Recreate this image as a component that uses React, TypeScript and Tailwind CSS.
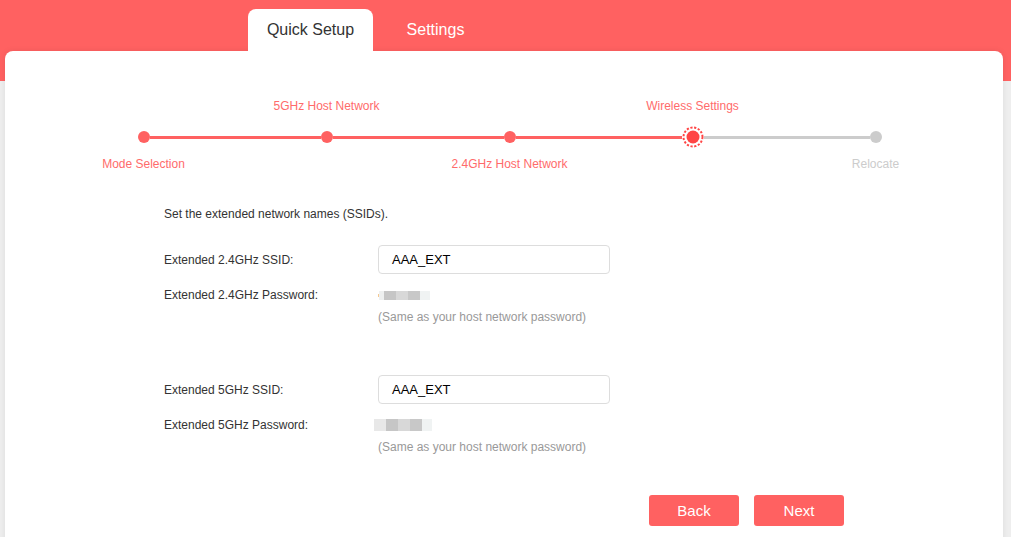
import React from "react";

type Step = { label: string; pos: "top" | "bottom"; state: "done" | "current" | "todo" };

const steps: Step[] = [
  { label: "Mode Selection", pos: "bottom", state: "done" },
  { label: "5GHz Host Network", pos: "top", state: "done" },
  { label: "2.4GHz Host Network", pos: "bottom", state: "done" },
  { label: "Wireless Settings", pos: "top", state: "current" },
  { label: "Relocate", pos: "bottom", state: "todo" },
];

function Dot({ state }: { state: Step["state"] }) {
  if (state === "current") {
    return (
      <svg width="22" height="22" viewBox="0 0 22 22" className="shrink-0">
        <circle cx="11" cy="11" r="9.5" fill="white" stroke="#ff4545" strokeWidth="2" strokeDasharray="2.2 1.6" />
        <circle cx="11" cy="11" r="6.5" fill="#ff4545" />
      </svg>
    );
  }
  return (
    <div
      className={
        "w-[12px] h-[12px] rounded-full shrink-0 " +
        (state === "done" ? "bg-[#ff6161]" : "bg-[#cccccc]")
      }
    />
  );
}

function Stepper() {
  return (
    <div className="flex ml-[47px] w-[915px]">
      {steps.map((s, i) => {
        const leftColor =
          i === 0 ? "bg-transparent" : s.state === "todo" ? "bg-[#cccccc]" : "bg-[#ff6161]";
        const rightColor =
          i === steps.length - 1
            ? "bg-transparent"
            : steps[i + 1].state === "todo"
            ? "bg-[#cccccc]"
            : "bg-[#ff6161]";
        const labelColor = s.state === "todo" ? "text-[#cccccc]" : "text-[#ff6b6b]";
        return (
          <div key={i} className="w-[183px] flex flex-col items-center">
            <div className={"mt-[1px] h-[14px] leading-[14px] text-[12px] whitespace-nowrap " + labelColor}>
              {s.pos === "top" ? s.label : ""}
            </div>
            <div className="mt-[14px] h-[20px] w-full flex items-center">
              <div className={"flex-1 h-[3px] " + leftColor} />
              <Dot state={s.state} />
              <div className={"flex-1 h-[3px] " + rightColor} />
            </div>
            <div className={"mt-[10px] h-[14px] leading-[14px] text-[12px] whitespace-nowrap " + labelColor}>
              {s.pos === "bottom" ? s.label : ""}
            </div>
          </div>
        );
      })}
    </div>
  );
}

function Masked({ first }: { first: string }) {
  return (
    <div className="flex h-full">
      <div className={"w-[5px] h-full " + first} />
      <div className="w-[12px] h-full bg-[#c6c6c6]" />
      <div className="w-[12px] h-full bg-[#d8d8d8]" />
      <div className="w-[12px] h-full bg-[#c8c8c8]" />
      <div className="w-[10px] h-full bg-[#f0f3f3]" />
    </div>
  );
}

function Input({ value }: { value: string }) {
  return (
    <div className="w-[232px] h-[29px] border border-[#dddddd] rounded-[4px] pl-[13px] flex items-center text-[13px] text-black bg-white">
      {value}
    </div>
  );
}

export default function App() {
  return (
    <div
      className="w-[1011px] h-[537px] overflow-hidden bg-[#eeeeee] text-[#333333]"
      style={{ fontFamily: '"Liberation Sans", Arial, sans-serif' }}
    >
      <div className="h-[81px] bg-[#ff6161] pt-[9px] pl-[248px] flex">
        <div className="w-[125px] h-[42px] bg-white rounded-t-[8px] flex items-center justify-center text-[16px] text-[#333333]">
          Quick Setup
        </div>
        <div className="w-[125px] h-[42px] flex items-center justify-center text-[16px] text-white">
          Settings
        </div>
      </div>
      <div className="-mt-[30px] mx-[5px] w-[998px] h-[520px] bg-white rounded-t-[8px] shadow-[0_0_6px_rgba(0,0,0,0.08)] pt-[47px]">
        <Stepper />
        <div className="pl-[159px]">
          <div className="mt-[36px] h-[14px] leading-[14px] text-[12px]">
            Set the extended network names (SSIDs).
          </div>

          <div className="mt-[24px] flex items-center">
            <div className="w-[214px] text-[12px]">Extended 2.4GHz SSID:</div>
            <Input value="AAA_EXT" />
          </div>
          <div className="mt-[14px] h-[14px] flex items-center">
            <div className="w-[214px] text-[12px] leading-[14px]">Extended 2.4GHz Password:</div>
            <div className="h-[9px] flex items-center">
              <div className="w-[1px] h-[3px] bg-[#f5c890]" />
              <Masked first="bg-[#eef0f0]" />
            </div>
          </div>
          <div className="mt-[8px] h-[14px] leading-[14px] text-[12px] text-[#999999] ml-[214px]">
            (Same as your host network password)
          </div>

          <div className="mt-[51px] flex items-center">
            <div className="w-[214px] text-[12px]">Extended 5GHz SSID:</div>
            <Input value="AAA_EXT" />
          </div>
          <div className="mt-[14px] h-[14px] flex items-center">
            <div className="w-[210px] text-[12px] leading-[14px]">Extended 5GHz Password:</div>
            <div className="h-[12px] flex">
              <div className="w-[7px] h-full bg-[#e8e8e8]" />
              <Masked first="bg-[#e8e8e8]" />
            </div>
          </div>
          <div className="mt-[8px] h-[14px] leading-[14px] text-[12px] text-[#999999] ml-[214px]">
            (Same as your host network password)
          </div>
        </div>

        <div className="mt-[41px] flex pl-[644px] gap-[15px]">
          <button className="w-[90px] h-[31px] pt-[2px] rounded-[3px] bg-[#ff6161] text-white text-[15px]">
            Back
          </button>
          <button className="w-[90px] h-[31px] pt-[2px] rounded-[3px] bg-[#ff6161] text-white text-[15px]">
            Next
          </button>
        </div>
      </div>
    </div>
  );
}
